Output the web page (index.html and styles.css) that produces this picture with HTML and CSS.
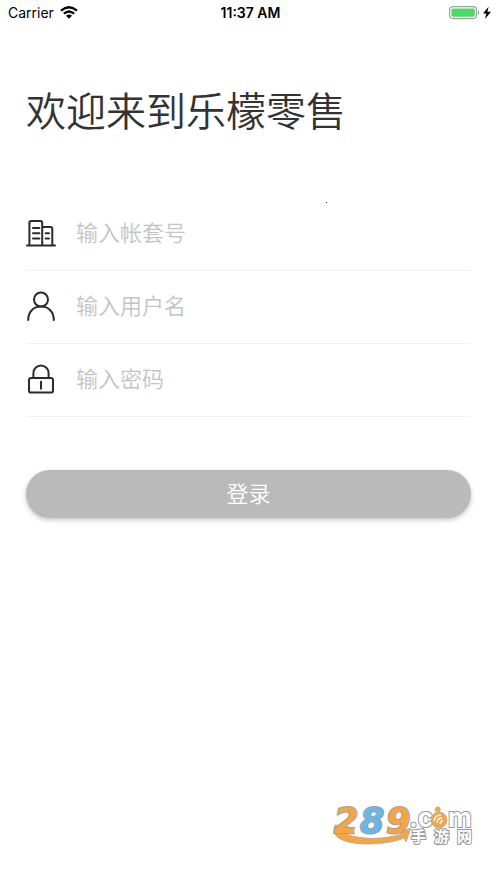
FILE: index.html
```html
<!DOCTYPE html>
<html lang="zh-CN">
<head>
<meta charset="utf-8">
<meta name="viewport" content="width=device-width, initial-scale=1">
<title>登录</title>
<link rel="stylesheet" href="styles.css">
</head>
<body>
<header class="status">
  <div class="carrier">
    <span>Carrier</span>
    <svg width="18" height="13" viewBox="0 0 18 13" fill="none" stroke="#000" stroke-width="2.3" aria-hidden="true">
      <path d="M1 4.6Q9-2.2 17 4.6M3.9 7.7Q9 3.3 14.1 7.7"/>
      <path d="M6 9.8Q9 7.2 12 9.8L9 12.8Z" fill="#000" stroke="none"/>
    </svg>
  </div>
  <time class="clock">11:37 AM</time>
  <div class="power">
    <svg width="44" height="16" viewBox="0 0 44 16" aria-hidden="true">
      <rect x="0.6" y="1.6" width="27" height="12" rx="3.5" fill="#fff" stroke="#a0a0a0" stroke-width="1.2"/>
      <rect x="2.4" y="3.4" width="23.4" height="8.4" rx="1.8" fill="#4cd964"/>
      <path d="M29 5q2.4 2.6 0 5.2z" fill="#a0a0a0"/>
      <path d="M39.6 1.8L34 8.6h3.3L36 14l6-7.3h-3.6z" fill="#000"/>
    </svg>
  </div>
</header>

<main class="page">
  <h1 class="title">欢迎来到乐檬零售</h1>
  <form class="form">
    <i class="speck"></i>
    <div class="field">
      <label for="account" aria-label="帐套号">
        <svg class="icon" viewBox="0 0 30 30" aria-hidden="true">
          <path d="M1 27.5h28M3.4 27.5V4.8q0-1.8 1.8-1.8h9.2q1.8 0 1.8 1.8v22.7M16.2 9h8.3q1.8 0 1.8 1.8v16.7M7 10h6.4M7 15.2h6.4M7 20.4h6.4M19.6 15.2h3.4M19.6 20.4h3.4"/>
        </svg>
      </label>
      <input id="account" type="text" placeholder="输入帐套号">
    </div>
    <div class="field">
      <label for="user" aria-label="用户名">
        <svg class="icon" viewBox="0 0 30 30" aria-hidden="true">
          <circle cx="15" cy="8.5" r="7"/>
          <path d="M2.2 29C2.2 20.8 7.5 15.6 15 15.6S27.8 20.8 27.8 29"/>
        </svg>
      </label>
      <input id="user" type="text" placeholder="输入用户名">
    </div>
    <div class="field">
      <label for="password" aria-label="密码">
        <svg class="icon" viewBox="0 0 30 30" aria-hidden="true">
          <rect x="3" y="14" width="24" height="14.6" rx="2.2"/>
          <path d="M7.4 14V9.2a7.6 7.6 0 0 1 15.2 0V14M15 17.8v7"/>
        </svg>
      </label>
      <input id="password" type="password" placeholder="输入密码">
    </div>
    <button class="submit" type="submit">登录</button>
  </form>
</main>

<svg class="brand" width="144" height="44" viewBox="0 0 144 44" role="img" aria-label="289.com 手游网">
  <path class="swoosh" d="M4 22C0 31 6 40 34 41C50 41 64 39 73 35L75 39L80 25L68 29L71 31C58 35 44 36 34 35C24 34 17 32 14 30L24 31L18 24Z"/>
  <g class="digits">
    <text x="3" y="30">2</text>
    <text class="blue" x="29" y="30">8</text>
    <text x="55" y="30">9</text>
  </g>
  <text class="domain" x="78" y="24">.c</text>
  <text class="domain" x="117" y="24">m</text>
  <circle cx="108" cy="17" r="8" fill="#f6a545" stroke="#aaa" stroke-width=".8"/>
  <path d="M103 18q1-6 7-6M106 20q0-5 5-5M109 21q0-3 3-3" fill="none" stroke="#fff" stroke-width="1.3"/>
  <path d="M104 8q0-5 4-4q3 2 0 5z" fill="#f6a545" stroke="#aaa" stroke-width=".6"/>
  <text class="site" x="80 103 126" y="39">手游网</text>
</svg>
</body>
</html>
```
FILE: styles.css
```css
* {
  box-sizing: border-box;
}

body {
  margin: 0;
  min-height: 100vh;
  position: relative;
  background: #fff;
  color: #333;
  font-family: "Noto Sans CJK SC", sans-serif;
}

.status {
  display: grid;
  grid-template-columns: 1fr auto 1fr;
  align-items: center;
  height: 25px;
  padding: 0 4px 0 8px;
  color: #000;
  font-family: Inter, sans-serif;
  font-size: 14px;
}

.carrier {
  display: flex;
  align-items: center;
  gap: 6px;
}

.clock {
  font-weight: 600;
}

.power {
  display: flex;
  justify-content: flex-end;
}

.page {
  padding: 54px 26px 0;
}

.title {
  margin: 0;
  font-size: 40px;
  font-weight: 350;
  line-height: 60px;
}

.form {
  position: relative;
  margin-top: 59px;
}

.speck {
  position: absolute;
  top: 4px;
  left: 300px;
  width: 1px;
  height: 1px;
  background: #333;
}

.field {
  display: flex;
  align-items: center;
  gap: 20px;
  height: 73px;
  padding-bottom: 2px;
  border-bottom: 1px solid #f2f2f2;
}

.field label {
  display: flex;
}

.icon {
  width: 30px;
  height: 30px;
  fill: none;
  stroke: #2b2b2b;
  stroke-width: 2;
  stroke-linecap: round;
}

.field input {
  flex: 1;
  min-width: 0;
  padding: 0 0 4px;
  border: 0;
  outline: 0;
  background: transparent;
  color: #333;
  font: 350 22px/32px "Noto Sans CJK SC", sans-serif;
}

.field input::placeholder {
  color: #c4c4c4;
  opacity: 1;
}

.submit {
  display: block;
  width: 100%;
  height: 48px;
  margin-top: 53px;
  padding: 0 0 4px;
  border: 0;
  border-radius: 24px;
  background: #bababa;
  box-shadow: 0 2px 5px rgba(0, 0, 0, 0.24);
  color: #fff;
  font: 350 22px/32px "Noto Sans CJK SC", sans-serif;
}

.brand {
  position: absolute;
  right: 22px;
  bottom: 36px;
  overflow: visible;
}

.swoosh {
  fill: #f6a545;
  stroke: #aaa;
  stroke-width: 0.8;
}

.digits {
  fill: #f6a545;
  stroke: #a0a0a0;
  stroke-width: 2;
  paint-order: stroke;
  font: italic 700 35px "DejaVu Sans", sans-serif;
}

.digits .blue {
  fill: #69b7e6;
}

.domain,
.site {
  fill: #fff;
  stroke: #999;
  stroke-width: 2;
  paint-order: stroke;
}

.domain {
  font: 700 26px Inter, sans-serif;
}

.site {
  font: 700 15px "Noto Sans CJK SC", sans-serif;
}
```
